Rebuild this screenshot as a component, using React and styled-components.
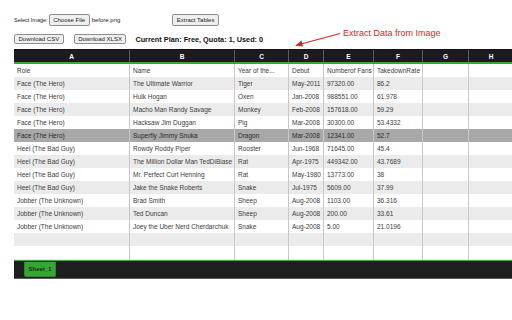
import React from 'react';
import styled, { createGlobalStyle } from 'styled-components';

const Global = createGlobalStyle`
  html, body { margin: 0; padding: 0; background: #fff; overflow: hidden; }
  body { font-family: "Liberation Sans", Arial, Helvetica, sans-serif; }
`;

const COLS = '116px 105px 54px 35px 50px 49px 46px 45px';

const Page = styled.div`
  position: relative;
  width: 512px;
  height: 320px;
  overflow: hidden;
  box-sizing: border-box;
  padding: 14px 0 0 14px;
`;

const Toolbar = styled.div`
  display: flex;
  align-items: center;
  height: ${p => p.$h}px;
  margin-top: ${p => p.$mt || 0}px;
`;

const Label = styled.span`
  font-size: ${p => p.$size || 5.5}px;
  color: #222;
  white-space: nowrap;
  margin-left: ${p => p.$ml || 0}px;
`;

const Button = styled.button`
  font-family: inherit;
  font-size: 6px;
  color: #222;
  height: 100%;
  padding: 0 3.5px;
  margin: 0 0 0 ${p => p.$ml || 0}px;
  background: #efefef;
  border: 1px solid #8f8f8f;
  border-radius: 2px;
  white-space: nowrap;
  display: flex;
  align-items: center;
  box-sizing: border-box;
`;

const PlanText = styled.span`
  font-size: 7.3px;
  font-weight: 700;
  color: #111;
  margin-left: 9px;
  white-space: nowrap;
`;

const Note = styled.span`
  position: absolute;
  left: 343px;
  top: 28px;
  font-size: 9px;
  line-height: 11px;
  color: #d42828;
  white-space: nowrap;
`;

const Arrow = styled.svg`
  position: absolute;
  left: 290px;
  top: 28px;
`;

const Sheet = styled.div`
  margin-top: 5px;
  width: 540px;
`;

const HeaderRow = styled.div`
  display: grid;
  grid-template-columns: ${COLS};
  height: 12px;
  background: #1c1c1c;
  border-top: 1px solid #111;
  border-bottom: 2px solid #3da53a;
  box-sizing: content-box;
`;

const HeaderCell = styled.div`
  display: flex;
  align-items: center;
  justify-content: center;
  color: #fff;
  font-weight: 700;
  font-size: 6.5px;
  border-right: 1px solid #5c5c5c;
`;

const Body = styled.div`
  height: 196px;
  overflow: hidden;
`;

const Row = styled.div`
  display: grid;
  grid-template-columns: ${COLS};
  height: 13px;
  background: ${p => (p.$selected ? '#a8a8a8' : p.$alt ? '#ebebeb' : '#ffffff')};
`;

const Cell = styled.div`
  display: flex;
  align-items: center;
  padding-left: 3px;
  font-size: 6.5px;
  color: ${p => (p.$selected ? '#2a2a2a' : '#3c3c3c')};
  border-right: 1px solid #c8c8c8;
  white-space: nowrap;
  overflow: hidden;
`;

const Footer = styled.div`
  height: 17px;
  background: #1e1e1e;
  border-top: 1px solid #3da53a;
  border-bottom: 1px solid #5a5a5a;
  padding-left: 10px;
  display: flex;
  align-items: flex-start;
`;

const Tab = styled.div`
  width: 32px;
  height: 15px;
  margin-top: 1px;
  background: #35a533;
  border: 1px solid #2b8a2a;
  border-top: none;
  border-radius: 0 0 2px 2px;
  box-sizing: border-box;
  display: flex;
  align-items: center;
  justify-content: center;
  font-size: 6px;
  font-weight: 700;
  color: #14301a;
`;

const letters = ['A', 'B', 'C', 'D', 'E', 'F', 'G', 'H'];

const rows = [
  ['Role', 'Name', 'Year of the...', 'Debut', 'Numberof Fans', 'TakedownRate'],
  ['Face (The Hero)', 'The Ultimate Warrior', 'Tiger', 'May-2011', '97320.00', '86.2'],
  ['Face (The Hero)', 'Hulk Hogan', 'Oxen', 'Jan-2008', '988551.00', '61.978'],
  ['Face (The Hero)', 'Macho Man Randy Savage', 'Monkey', 'Feb-2008', '157618.00', '59.29'],
  ['Face (The Hero)', 'Hacksaw Jim Duggan', 'Pig', 'Mar-2008', '30300.00', '53.4332'],
  ['Face (The Hero)', 'Superfly Jimmy Snuka', 'Dragon', 'Mar-2008', '12341.00', '52.7'],
  ['Heel (The Bad Guy)', 'Rowdy Roddy Piper', 'Rooster', 'Jun-1968', '71645.00', '45.4'],
  ['Heel (The Bad Guy)', 'The Million Dollar Man TedDiBiase', 'Rat', 'Apr-1975', '449342.00', '43.7689'],
  ['Heel (The Bad Guy)', 'Mr. Perfect Curt Henning', 'Rat', 'May-1980', '13773.00', '38'],
  ['Heel (The Bad Guy)', 'Jake the Snake Roberts', 'Snake', 'Jul-1975', '5609.00', '37.99'],
  ['Jobber (The Unknown)', 'Brad Smith', 'Sheep', 'Aug-2008', '1103.00', '36.316'],
  ['Jobber (The Unknown)', 'Ted Duncan', 'Sheep', 'Aug-2008', '200.00', '33.61'],
  ['Jobber (The Unknown)', 'Joey the Uber Nerd Cherdarchuk', 'Snake', 'Aug-2008', '5.00', '21.0196'],
  [],
  [],
  [],
];

export default function App() {
  return (
    <>
      <Global />
      <Page>
        <Toolbar $h={12}>
          <Label>Select Image:</Label>
          <Button $ml={1}>Choose File</Button>
          <Label $size={6} $ml={2}>before.png</Label>
          <Button $ml={52}>Extract Tables</Button>
        </Toolbar>
        <Toolbar $h={10} $mt={8}>
          <Button>Download CSV</Button>
          <Button $ml={10}>Download XLSX</Button>
          <PlanText>Current Plan: Free, Quota: 1, Used: 0</PlanText>
        </Toolbar>
        <Note>Extract Data from Image</Note>
        <Arrow width="56" height="22" viewBox="0 0 56 22">
          <line x1="50" y1="5.5" x2="11" y2="16" stroke="#d42828" strokeWidth="1.2" />
          <polygon points="5,17.8 11.5,12.6 13,18.4" fill="#d42828" />
        </Arrow>
        <Sheet>
          <HeaderRow>
            {letters.map(l => (
              <HeaderCell key={l}>{l}</HeaderCell>
            ))}
          </HeaderRow>
          <Body>
            {rows.map((r, i) => (
              <Row key={i} $alt={i % 2 === 1} $selected={i === 5}>
                {letters.map((l, j) => (
                  <Cell key={l} $selected={i === 5}>{r[j] || ''}</Cell>
                ))}
              </Row>
            ))}
          </Body>
          <Footer>
            <Tab>Sheet_1</Tab>
          </Footer>
        </Sheet>
      </Page>
    </>
  );
}
